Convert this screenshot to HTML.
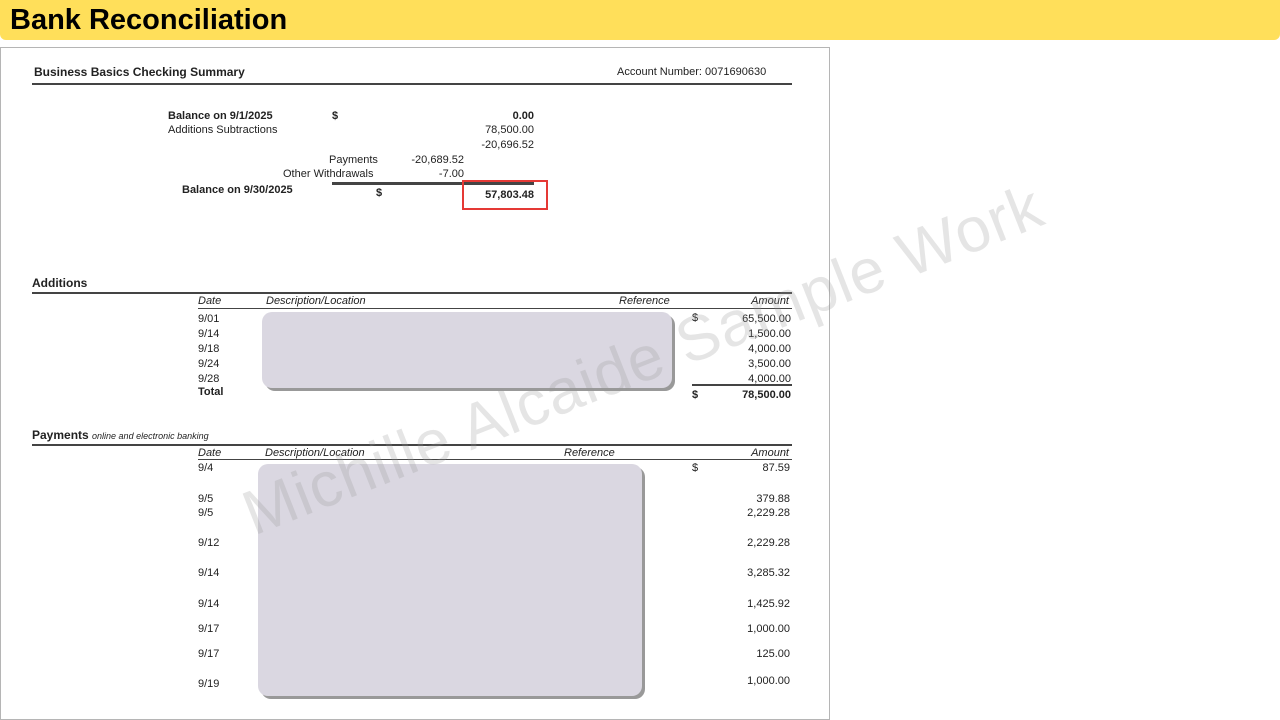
<!DOCTYPE html>
<html><head><style>
body{margin:0;width:1280px;height:720px;background:#fff;position:relative;overflow:hidden;font-family:"Liberation Sans",Arial,sans-serif;color:#222}
.hdr{position:absolute;left:0;top:0;width:1280px;height:40px;background:#FFDF5A;border-radius:0 0 6px 6px}
.hdr span{position:absolute;left:10px;top:4px;font-size:29px;font-weight:bold;color:#000;letter-spacing:0px}
.doc{position:absolute;left:0;top:47px;width:828px;height:671px;border:1px solid #b5b5b5}
.t{position:absolute;font-size:11px;white-space:nowrap;line-height:13px}
.b{font-weight:bold}
.i{font-style:italic}
.r{text-align:right}
.ln{position:absolute;background:#444}
.blur{position:absolute;background:#dad7e1;border-radius:10px;box-shadow:3px 3px 0 #999}
.wm{position:absolute;left:643px;top:360px;transform:translate(-50%,-50%) rotate(-21.5deg);font-size:63px;color:rgba(150,150,150,0.25);white-space:nowrap;letter-spacing:1px}
</style></head><body>
<div class="hdr"><span>Bank Reconciliation</span></div>
<div class="doc"></div>
<div class="t b" style="left:34px;top:66px;font-size:12px">Business Basics Checking Summary</div>
<div class="t" style="left:617px;top:66px">Account Number: 0071690630</div>
<div class="ln" style="left:32px;top:83px;width:760px;height:2px"></div>

<div class="t b" style="left:168px;top:110px">Balance on 9/1/2025</div>
<div class="t b" style="left:332px;top:110px">$</div>
<div class="t b r" style="left:450px;top:110px;width:84px">0.00</div>
<div class="t" style="left:168px;top:124px">Additions Subtractions</div>
<div class="t r" style="left:450px;top:124px;width:84px">78,500.00</div>
<div class="t r" style="left:450px;top:139px;width:84px">-20,696.52</div>
<div class="t" style="left:329px;top:154px">Payments</div>
<div class="t r" style="left:390px;top:154px;width:74px">-20,689.52</div>
<div class="t" style="left:283px;top:168px">Other Withdrawals</div>
<div class="t r" style="left:390px;top:168px;width:74px">-7.00</div>
<div class="ln" style="left:332px;top:182px;width:202px;height:3px"></div>
<div class="t b" style="left:182px;top:184px">Balance on 9/30/2025</div>
<div class="t b" style="left:376px;top:187px">$</div>
<div class="t b r" style="left:450px;top:189px;width:84px">57,803.48</div>
<div style="position:absolute;left:462px;top:180px;width:86px;height:30px;border:2px solid #e53935;box-sizing:border-box"></div>

<div class="t b" style="left:32px;top:277px;font-size:12px">Additions</div>
<div class="ln" style="left:32px;top:292px;width:760px;height:2px"></div>
<div class="t i" style="left:198px;top:295px">Date</div>
<div class="t i" style="left:266px;top:295px">Description/Location</div>
<div class="t i" style="left:619px;top:295px">Reference</div>
<div class="t i r" style="left:700px;top:295px;width:89px">Amount</div>
<div class="ln" style="left:198px;top:308px;width:594px;height:1px"></div>
<div class="t" style="left:198px;top:312px;line-height:15px">9/01<br>9/14<br>9/18<br>9/24<br>9/28</div>
<div class="t b" style="left:198px;top:386px">Total</div>
<div class="t" style="left:692px;top:312px">$</div>
<div class="t r" style="left:700px;top:312px;width:91px;line-height:15px">65,500.00<br>1,500.00<br>4,000.00<br>3,500.00<br>4,000.00</div>
<div class="ln" style="left:692px;top:384px;width:100px;height:2px"></div>
<div class="t b" style="left:692px;top:389px">$</div>
<div class="t b r" style="left:700px;top:389px;width:91px">78,500.00</div>
<div class="blur" style="left:262px;top:312px;width:410px;height:76px"></div>

<div class="t b" style="left:32px;top:429px;font-size:12px">Payments <span class="i" style="font-weight:normal;font-size:9px">online and electronic banking</span></div>
<div class="ln" style="left:32px;top:444px;width:760px;height:2px"></div>
<div class="t i" style="left:198px;top:447px">Date</div>
<div class="t i" style="left:265px;top:447px">Description/Location</div>
<div class="t i" style="left:564px;top:447px">Reference</div>
<div class="t i r" style="left:700px;top:447px;width:89px">Amount</div>
<div class="ln" style="left:198px;top:459px;width:594px;height:1px"></div>
<div class="t" style="left:198px;top:462px">9/4</div>
<div class="t" style="left:692px;top:462px">$</div>
<div class="t r" style="left:700px;top:462px;width:90px">87.59</div>
<div class="t" style="left:198px;top:493px">9/5</div><div class="t r" style="left:700px;top:493px;width:90px">379.88</div>
<div class="t" style="left:198px;top:507px">9/5</div><div class="t r" style="left:700px;top:507px;width:90px">2,229.28</div>
<div class="t" style="left:198px;top:537px">9/12</div><div class="t r" style="left:700px;top:537px;width:90px">2,229.28</div>
<div class="t" style="left:198px;top:567px">9/14</div><div class="t r" style="left:700px;top:567px;width:90px">3,285.32</div>
<div class="t" style="left:198px;top:598px">9/14</div><div class="t r" style="left:700px;top:598px;width:90px">1,425.92</div>
<div class="t" style="left:198px;top:623px">9/17</div><div class="t r" style="left:700px;top:623px;width:90px">1,000.00</div>
<div class="t" style="left:198px;top:648px">9/17</div><div class="t r" style="left:700px;top:648px;width:90px">125.00</div>
<div class="t" style="left:198px;top:678px">9/19</div><div class="t r" style="left:700px;top:675px;width:90px">1,000.00</div>
<div class="blur" style="left:258px;top:464px;width:384px;height:232px"></div>

<div class="wm">Michille Alcaide Sample Work</div>
</body></html>
